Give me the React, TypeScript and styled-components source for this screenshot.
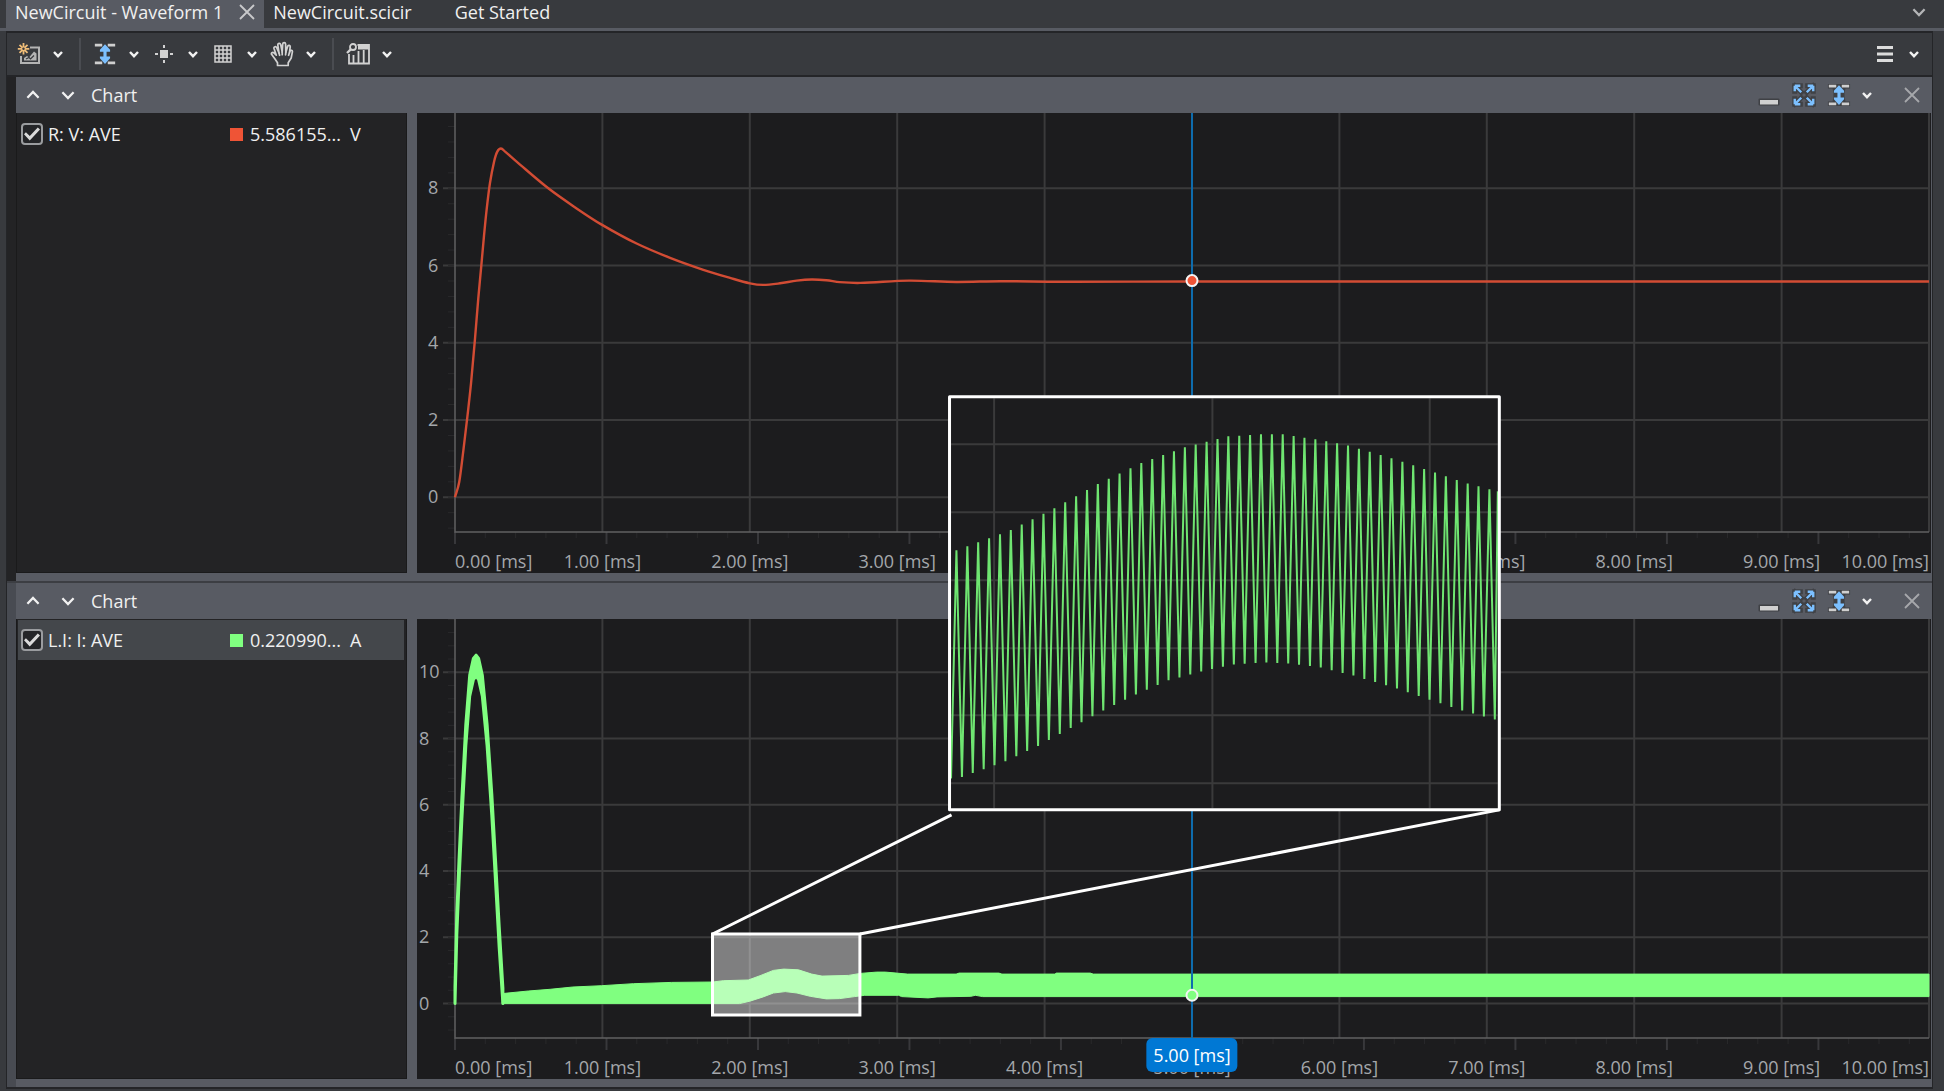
import React, { useLayoutEffect, useRef, useState } from 'react';
import styled, { createGlobalStyle } from 'styled-components';

type Point = [number, number];

const color = {
  bar: '#383a3e',
  panel: '#585b63',
  edge: '#242528',
  list: '#232325',
  plot: '#1c1c1e',
  grid: '#3a3a3b',
  tick: '#38383b',
  minorTick: '#29292b',
  axis: '#606062',
  label: '#a4a7ab',
  text: '#f0f0f0',
  icon: '#d2d2d2',
  blue: '#7cc0ff',
  cursor: '#0e6cad',
  red: '#ef5436',
  green: '#80ff80',
};

const GlobalStyle = createGlobalStyle`
  * { box-sizing: border-box; }
  body {
    margin: 0;
    overflow: hidden;
    background: ${color.bar};
    color: ${color.text};
    font-family: 'Open Sans', 'Noto Sans', sans-serif;
    font-size: 18px;
    line-height: 24px;
  }
`;

const Window = styled.div`
  display: flex;
  flex-direction: column;
  height: 100vh;
`;

const TabBar = styled.nav`
  display: flex;
  align-items: stretch;
  height: 31px;
  padding: 0 18px 0 6px;
  border-bottom: 3px solid ${color.panel};
`;

const Tab = styled.div<{ $active?: boolean }>`
  display: flex;
  align-items: center;
  gap: 15px;
  padding: 0 8px 4px 9px;
  background: ${(p) => (p.$active ? color.panel : 'transparent')};
  & + & { margin-right: 26px; }
`;

const IconButton = styled.button<{ $width?: number }>`
  display: flex;
  flex: none;
  align-items: center;
  justify-content: center;
  width: ${(p) => p.$width ?? 24}px;
  height: 24px;
  padding: 0;
  border: 0;
  background: none;
  color: ${color.icon};
`;

const TabTitle = styled.button`
  padding: 0;
  border: 0;
  background: none;
  color: ${color.text};
  font: inherit;
  white-space: nowrap;
`;

const Spacer = styled.div`
  flex: 1;
`;

const Frame = styled.div`
  display: flex;
  flex: 1;
  flex-direction: column;
  min-height: 0;
  margin: 0 11px 2px 6px;
  border: 2px solid ${color.edge};
  border-width: 2px 1px 2px 1px;
`;

const Toolbar = styled.div`
  display: flex;
  align-items: center;
  height: 44px;
  padding: 0 13px 0 10px;
  border-bottom: 2px solid ${color.edge};
  background: ${color.bar};
`;

const Tool = styled.div<{ $gap?: number }>`
  display: flex;
  align-items: center;
  gap: ${(p) => p.$gap ?? 12}px;
`;

const ToolGroup = styled.div`
  display: flex;
  align-items: center;
  gap: 13px;
`;

const Separator = styled.div`
  width: 2px;
  height: 32px;
  margin: 0 12px 0 16px;
  background: #4a4c51;
`;

const Workspace = styled.div`
  position: relative;
  display: flex;
  flex: 1;
  flex-direction: column;
  gap: 2px;
  min-height: 0;
  background: #3c3e43;
`;

const Section = styled.section<{ $selected?: boolean }>`
  display: flex;
  flex: 1;
  flex-direction: column;
  min-height: 0;
  padding-left: 9px;
  background: ${(p) => (p.$selected ? '#484b52' : color.list)};
`;

const SectionHeader = styled.header`
  display: flex;
  align-items: center;
  height: 36px;
  padding: 0 8px 0 5px;
  background: ${color.panel};
`;

const SectionTitle = styled.h2`
  margin: 0;
  font-size: 18px;
  font-weight: 400;
`;

const HeaderActions = styled.div`
  display: flex;
  align-items: center;
  gap: 11px;
  margin-right: 28px;
`;

const SectionBody = styled.div`
  display: flex;
  flex: 1;
  gap: 10px;
  min-height: 0;
  padding: 0 1px 8px 0;
  background: ${color.panel};
`;

const SignalList = styled.ul`
  flex: none;
  width: 391px;
  margin: 0;
  padding: 1px 2px 0 1px;
  border: 1px solid #1a1a1b;
  border-width: 0 1px 1px 1px;
  background: ${color.list};
  list-style: none;
`;

const Signal = styled.li<{ $selected?: boolean }>`
  display: grid;
  grid-template-columns: 22px 187px 20px 100px 1fr;
  align-items: center;
  height: 40px;
  padding: 0 3px;
  background: ${(p) => (p.$selected ? '#44474b' : 'transparent')};
`;

const Check = styled.input`
  display: grid;
  place-content: center;
  width: 22px;
  height: 22px;
  margin: 0;
  border: 2px solid #9a9c9f;
  border-radius: 4px;
  background: #242528;
  appearance: none;
  &:checked::before {
    content: '';
    width: 16px;
    height: 14px;
    background: #dadada;
    clip-path: polygon(0 52%, 12% 38%, 36% 64%, 86% 4%, 100% 18%, 36% 96%);
  }
`;

const SignalName = styled.label`
  padding-left: 5px;
  white-space: nowrap;
`;

const Swatch = styled.span<{ $color: string }>`
  width: 13px;
  height: 13px;
  background: ${(p) => p.$color};
`;

const PlotArea = styled.div`
  position: relative;
  flex: 1;
  min-width: 0;
  overflow: hidden;
  background: ${color.plot};
`;

const PlotSvg = styled.svg`
  display: block;
  position: absolute;
  inset: 0;
  width: 100%;
  height: 100%;
  text { fill: ${color.label}; }
`;

const CursorBadge = styled.output`
  position: absolute;
  bottom: 7px;
  padding: 5px 7px;
  border-radius: 6px;
  background: #0078d4;
  color: #fff;
  transform: translateX(-50%);
  white-space: nowrap;
`;

const Overlay = styled.svg`
  position: absolute;
  inset: 0;
  width: 100%;
  height: 100%;
  pointer-events: none;
`;

function useSize<T extends Element>() {
  const ref = useRef<T>(null);
  const [size, setSize] = useState({ width: 0, height: 0 });
  useLayoutEffect(() => {
    const node = ref.current;
    if (!node) return;
    const measure = () => {
      const box = node.getBoundingClientRect();
      setSize({ width: box.width, height: box.height });
    };
    measure();
    const observer = new ResizeObserver(measure);
    observer.observe(node);
    return () => observer.disconnect();
  }, []);
  return { ref, ...size };
}

/* ---------- signal data: [time in ms, value] ---------- */

const voltage: Point[] = [
  [0, 0], [0.029, 0.4], [0.057, 1.22], [0.084, 2.09], [0.109, 2.96], [0.136, 4.12],
  [0.158, 5.15], [0.179, 6.02], [0.197, 6.78], [0.215, 7.46], [0.237, 8.13], [0.265, 8.69],
  [0.287, 8.95], [0.312, 9.03], [0.34, 8.95], [0.418, 8.69], [0.633, 8.0], [0.825, 7.48],
  [0.995, 7.06], [1.232, 6.57], [1.459, 6.2], [1.685, 5.89], [1.866, 5.68], [2.001, 5.54],
  [2.09, 5.5], [2.205, 5.54], [2.318, 5.61], [2.42, 5.64], [2.52, 5.62], [2.61, 5.57],
  [2.75, 5.55], [3.08, 5.61], [3.4, 5.575], [3.7, 5.595], [4.1, 5.58], [5, 5.586], [10, 5.586],
];

const inrush: Point[] = [
  [0, 0.2], [0.012, 2.4], [0.027, 4.0], [0.047, 5.9], [0.073, 8.1], [0.1, 9.6],
  [0.125, 10.1], [0.143, 10.2], [0.16, 10.1], [0.185, 9.6], [0.218, 8.1],
  [0.25, 6.0], [0.279, 3.7], [0.3, 2.0], [0.325, 0.15],
];

const currentHigh: Point[] = [
  [0.32, 0.3], [0.497, 0.38], [0.645, 0.43], [0.8, 0.5], [0.995, 0.54], [1.21, 0.6],
  [1.47, 0.64], [1.75, 0.65], [1.82, 0.69], [1.99, 0.71], [2.07, 0.84], [2.16, 1.0],
  [2.23, 1.04], [2.33, 1.02], [2.42, 0.89], [2.49, 0.83], [2.67, 0.85], [2.75, 0.91],
  [2.86, 0.95], [2.92, 0.95], [3.07, 0.89], [3.4, 0.89], [3.42, 0.92], [3.69, 0.92],
  [3.71, 0.89], [4.07, 0.89], [4.08, 0.92], [4.31, 0.92], [4.33, 0.89], [10, 0.89],
];

const currentLow: Point[] = [
  [0.32, 0], [1.93, 0], [2.0, 0.07], [2.09, 0.2], [2.16, 0.32], [2.24, 0.36], [2.32, 0.32],
  [2.41, 0.22], [2.52, 0.14], [2.61, 0.15], [2.71, 0.21], [2.78, 0.25], [3.01, 0.25],
  [3.03, 0.21], [3.21, 0.17], [3.27, 0.2], [3.5, 0.22], [3.53, 0.25], [3.58, 0.21], [10, 0.21],
];

/* Ripple envelopes of the magnified detail, in the detail's own units. */
const detailHigh: Point[] = [
  [0, 153], [5, 152], [59, 132], [103, 110], [146, 86], [189, 65], [233, 49], [277, 38],
  [309, 36], [331, 36], [364, 41], [396, 47], [440, 60], [483, 74], [515, 85], [546, 93],
];
const detailLow: Point[] = [
  [0, 380], [10, 379], [32, 371], [54, 363], [86, 348], [119, 330], [152, 312], [185, 296],
  [217, 282], [250, 273], [282, 266], [315, 264], [336, 265], [369, 269], [401, 277],
  [445, 290], [477, 301], [510, 312], [546, 322],
];

const lerp = (points: Point[], x: number) => {
  const i = Math.max(1, points.findIndex((p) => p[0] >= x));
  const [x0, y0] = points[i - 1];
  const [x1, y1] = points[i];
  return y0 + ((y1 - y0) * (x - x0)) / (x1 - x0);
};

const polyline = (points: Point[]) => points.map(([x, y]) => `${x.toFixed(1)},${y.toFixed(1)}`).join(' ');

const smoothPath = (p: Point[]) =>
  p.slice(1).reduce((d, [x, y], i) => {
    const [ax, ay] = p[Math.max(0, i - 1)];
    const [bx, by] = p[i];
    const [cx, cy] = p[Math.min(p.length - 1, i + 2)];
    const k1 = (x - bx) / 3 / Math.max(0.01, x - ax);
    const k2 = (x - bx) / 3 / Math.max(0.01, cx - bx);
    return (
      d +
      `C${bx + (x - ax) * k1} ${by + (y - ay) * k1} ${x - (cx - bx) * k2} ${y - (cy - by) * k2} ${x} ${y}`
    );
  }, `M${p[0][0]} ${p[0][1]}`);

const RIPPLE = 0.32;
const inrushBand: Point[] = [
  ...inrush.map(([t, v]) => [t, v + RIPPLE] as Point),
  ...inrush.map(([t, v]) => [t, Math.max(0, v - RIPPLE)] as Point).reverse(),
];

const detailRipple: Point[] = Array.from({ length: 102 }, (_, i) => {
  const x = Math.min(546, i * 5.43);
  return [x, lerp(i % 2 ? detailHigh : detailLow, x)];
});

/* ---------- plot ---------- */

const AXIS_LEFT = 38;
const AXIS_BOTTOM = 41;
const SPAN = 10;
const range = (n: number) => Array.from({ length: n }, (_, i) => i);

interface ChartSpec {
  signal: string;
  value: string;
  unit: string;
  tone: string;
  max: number;
  min: number;
  ticks: number[];
  minor: number;
  cursorValue: number;
  selected?: boolean;
}

const charts: ChartSpec[] = [
  { signal: 'R: V: AVE', value: '5.586155...', unit: 'V', tone: color.red, max: 9.95, min: -0.9, ticks: [0, 2, 4, 6, 8], minor: 0.4, cursorValue: 5.61 },
  { signal: 'L.I: I: AVE', value: '0.220990...', unit: 'A', tone: color.green, max: 11.61, min: -1.04, ticks: [0, 2, 4, 6, 8, 10], minor: 0.4, cursorValue: 0.25, selected: true },
];

function Plot({ spec }: { spec: ChartSpec }) {
  const { ref, width, height } = useSize<HTMLDivElement>();
  const right = width - 2;
  const bottom = height - AXIS_BOTTOM;
  const x = (t: number) => AXIS_LEFT + ((right - AXIS_LEFT) * t) / SPAN;
  const y = (v: number) => (bottom * (spec.max - v)) / (spec.max - spec.min);
  const map = (points: Point[]) => points.map(([t, v]) => [x(t), y(v)] as Point);
  const minorCount = Math.floor((spec.max - spec.min) / spec.minor);
  const firstMinor = Math.ceil(spec.min / spec.minor);
  const tickStep = (right - AXIS_LEFT) / 9.73 / 5;
  const labelX = spec.ticks.includes(10) ? 2 : 11;

  return (
    <PlotArea ref={ref}>
      {width > 0 && (
        <PlotSvg>
          {spec.ticks.map((v) => (
            <line key={v} x1={AXIS_LEFT - 12} x2={right} y1={y(v)} y2={y(v)} stroke={color.grid} strokeWidth={2} />
          ))}
          {range(10).map((i) => (
            <line key={i} x1={x(i + 1)} x2={x(i + 1)} y1={0} y2={bottom} stroke={color.grid} strokeWidth={2} />
          ))}
          {range(minorCount + 1).map((i) => (
            <line key={i} x1={AXIS_LEFT - 7} x2={AXIS_LEFT} y1={y((firstMinor + i) * spec.minor)} y2={y((firstMinor + i) * spec.minor)} stroke={color.minorTick} />
          ))}
          {range(49).map((i) => (
            <line
              key={i}
              x1={AXIS_LEFT + i * tickStep}
              x2={AXIS_LEFT + i * tickStep}
              y1={bottom}
              y2={bottom + (i % 5 ? 6 : 12)}
              stroke={i % 5 ? color.minorTick : color.tick}
              strokeWidth={i % 5 ? 1 : 2}
            />
          ))}
          <polyline points={`${AXIS_LEFT},0 ${AXIS_LEFT},${bottom} ${right},${bottom}`} fill="none" stroke={color.axis} strokeWidth={1.5} />
          {spec.ticks.map((v) => (
            <text key={v} x={labelX} y={y(v) + 6}>{v}</text>
          ))}
          {range(11).map((i) => (
            <text key={i} x={x(i)} y={bottom + 36} textAnchor={i === 0 ? 'start' : i === 10 ? 'end' : 'middle'}>
              {`${i}.00 [ms]`}
            </text>
          ))}
          {spec.unit === 'V' ? (
            <path d={smoothPath(map(voltage))} fill="none" stroke="#d24c34" strokeWidth={2.4} />
          ) : (
            <>
              <polygon points={polyline(map(inrushBand))} fill={color.green} stroke={color.green} strokeWidth={3} strokeLinejoin="round" />
              <polygon points={polyline([...map(currentHigh), ...map(currentLow).reverse()])} fill={color.green} stroke={color.green} />
            </>
          )}
          <line x1={x(5)} x2={x(5)} y1={0} y2={bottom} stroke={color.cursor} strokeWidth={2} />
          <circle cx={x(5)} cy={y(spec.cursorValue)} r={5.5} fill={spec.tone} stroke="#f4f4f4" strokeWidth={2} />
        </PlotSvg>
      )}
      {spec.selected && width > 0 && <CursorBadge style={{ left: x(5) }}>5.00 [ms]</CursorBadge>}
    </PlotArea>
  );
}

/* ---------- magnified detail, drawn across both charts ---------- */

function Magnifier() {
  const { ref, width, height } = useSize<SVGSVGElement>();
  const plotLeft = 448;
  const ms = (width - plotLeft - 3) / SPAN;
  const at = (t: number) => plotLeft + t * ms;
  const boxX = at(1.747);
  const boxW = ms;
  const boxY = height - 153;
  const insetX = at(3.355);
  const insetW = ms * 3.73;
  const insetY = height * 0.3167;
  const insetH = height * 0.4089;
  const insetBottom = insetY + insetH;

  return (
    <Overlay ref={ref} aria-hidden="true">
      {width > 0 && (
        <>
          <rect x={boxX} y={boxY} width={boxW} height={81} fill="rgba(255,255,255,0.44)" stroke="#fff" strokeWidth={3} />
          <path
            d={`M${boxX} ${boxY}L${insetX + 2} ${insetBottom + 5}M${boxX + boxW} ${boxY}L${insetX + insetW} ${insetBottom}`}
            stroke="#fff"
            strokeWidth={3}
          />
          <svg x={insetX} y={insetY} width={insetW} height={insetH} viewBox="-1.5 -1.5 549 413" preserveAspectRatio="none">
            <rect x={-2} y={-2} width={550} height={414} fill={color.plot} />
            {[43, 261, 478].map((v) => (
              <line key={v} x1={v} x2={v} y1={0} y2={410} stroke={color.grid} strokeWidth={2} />
            ))}
            {[46, 114, 182, 250, 317, 385].map((v) => (
              <line key={v} x1={0} x2={546} y1={v} y2={v} stroke={color.grid} strokeWidth={2} />
            ))}
            <polyline points={polyline(detailRipple)} fill="none" stroke="#6fe571" strokeWidth={2} strokeLinejoin="bevel" />
          </svg>
          <rect x={insetX} y={insetY} width={insetW} height={insetH} fill="none" stroke="#fff" strokeWidth={3} strokeLinejoin="round" />
        </>
      )}
    </Overlay>
  );
}

/* ---------- icons ---------- */

const Chevron = ({ up, large, tone = '#f2f2f2' }: { up?: boolean; large?: boolean; tone?: string }) => (
  <svg width={large ? 14 : 10} height={large ? 14 : 10} viewBox="0 0 10 10" fill="none" stroke={tone} strokeWidth={large ? 1.6 : 2.4}>
    <path d={up ? 'M1 7l4-4.200 4 4.200' : 'M1 3l4 4.200L9 3'} />
  </svg>
);

const Cross = ({ size = 16, tone = '#c8c9cb' }: { size?: number; tone?: string }) => (
  <svg width={size} height={size} viewBox="0 0 16 16" stroke={tone} strokeWidth={1.8}>
    <path d="M1 1l14 14M15 1L1 15" />
  </svg>
);

const FitVertical = ({ outlined }: { outlined?: boolean }) => (
  <svg width="26" height="26" viewBox="-1 -1 26 26">
    {outlined && (
      <path d="M0 0h24v5h-5l-1 5v4l1 5h5v5H0v-5h5l1-5v-4L5 5H0z" fill="#3f4145" />
    )}
    <path d="M1 2.500h8M15 2.500h8M1 21.500h8M15 21.500h8" stroke="#cfcfcf" strokeWidth="3" />
    <path d="M12 1.500l5.500 6v2h-3.800v5.200h3.800v2l-5.500 6-5.500-6v-2h3.800V9.500H6.500v-2z" fill={color.blue} />
  </svg>
);

const NewImage = () => (
  <svg width="24" height="24" viewBox="0 0 24 24" fill="none" stroke={color.icon}>
    <path d="M13 5.500h9v15.500H4V14" stroke="#b4b4b4" strokeWidth="2" />
    <path d="M7 18.500v-2.500l3-2 2 1.500 5-6 2.500 2v7z" fill="#b4b4b4" stroke="none" />
    <path d="M9 17l3-1.500 1.500 1.500 3.500-3.500" stroke="#383a3e" strokeWidth="1.200" />
    <path d="M6.500 1v11.500M.8 6.800h11.500M2.500 2.800l8 8M10.500 2.800l-8 8" stroke="#f0bd78" strokeWidth="1.800" />
    <circle cx="6.500" cy="6.800" r="1.200" fill="#383a3e" stroke="none" />
  </svg>
);

const Crosshair = () => (
  <svg width="20" height="20" viewBox="0 0 20 20" fill={color.icon}>
    <rect x="6" y="6" width="8" height="8" />
    <path d="M9 1h2v3H9zM9 16h2v3H9zM1 9h3v2H1zM16 9h3v2h-3z" />
  </svg>
);

const GridIcon = () => (
  <svg width="18" height="18" viewBox="0 0 18 18" fill="none" stroke={color.icon} strokeWidth="1.500">
    <path d="M1 1h16v16H1zM5 1v16M9 1v16M13 1v16M1 5h16M1 9h16M1 13h16" />
  </svg>
);

const Hand = () => (
  <svg width="24" height="26" viewBox="0 0 24 26" fill="none" stroke={color.icon} strokeWidth="1.700" strokeLinejoin="round" strokeLinecap="round">
    <path d="M7.500 24.500v-2.700L5 18 1.700 13.600c-1-1.500.9-2.900 2.200-1.700l2.400 2.300L4 7.500C3.500 5.600 6 4.900 6.700 6.700L9 12 7.800 4c-.2-2 2.400-2.400 2.900-.4L12.200 11l.5-8c.2-1.900 2.800-1.800 2.900.1L15.800 11.400l1.800-6c.6-1.700 2.900-1.100 2.600.7L19.400 12l.7-1.900c.8-1.500 2.600-.8 2.300.8L21.200 17l-3 4.800v2.700z" />
    <path d="M9 12l.6 2.300M12.200 11v2.700M15.800 11.400l-.2 2.400M19.400 12l-.8 2.300" />
  </svg>
);

const Histogram = () => (
  <svg width="24" height="22" viewBox="0 0 24 22" fill="none" stroke={color.icon} strokeWidth="1.800">
    <path d="M11.500 2H23v18.500H3V11" />
    <path d="M12 2h11v4.500H12z" fill={color.icon} stroke="none" />
    <path d="M7.500 12v8M12.500 8v12M17.700 7v13" />
    <circle cx="7" cy="4" r="3" />
    <path d="M5 6.200L1 10" strokeWidth="2.400" />
  </svg>
);

const MenuIcon = () => (
  <svg width="18" height="18" viewBox="0 0 18 18" stroke="#dcdcdc" strokeWidth="3">
    <path d="M1 2.500h16M1 9h16M1 15.500h16" />
  </svg>
);

const Minimize = () => (
  <svg width="22" height="24" viewBox="0 0 22 24">
    <rect x=".5" y="15.500" width="21" height="7" rx="1" fill="#3f4145" />
    <rect x="2" y="17" width="18" height="4.500" fill="#d0d0d0" />
  </svg>
);

const arrows = 'M2 2h6M2 2v6M2 2l7 7M22 2h-6M22 2v6M22 2l-7 7M2 22h6M2 22v-6M2 22l7-7M22 22h-6M22 22v-6M22 22l-7-7';

const Expand = () => (
  <svg width="26" height="26" viewBox="-1 -1 26 26">
    <path d={arrows} stroke="#3f4145" strokeWidth="5.500" strokeLinecap="square" />
    <path d={arrows} stroke={color.blue} strokeWidth="2.600" />
  </svg>
);

function ToolButton({ label, icon }: { label: string; icon: React.ReactNode }) {
  return (
    <Tool>
      <IconButton aria-label={label}>{icon}</IconButton>
      <IconButton $width={10} aria-label={`${label} options`}><Chevron /></IconButton>
    </Tool>
  );
}

function ChartSection({ spec }: { spec: ChartSpec }) {
  const id = `signal-${spec.unit}`;
  return (
    <Section $selected={spec.selected}>
      <SectionHeader>
        <IconButton aria-label="Move up"><Chevron up large /></IconButton>
        <IconButton $width={46} aria-label="Move down"><Chevron large /></IconButton>
        <SectionTitle>Chart</SectionTitle>
        <Spacer />
        <HeaderActions>
          <IconButton aria-label="Minimize"><Minimize /></IconButton>
          <IconButton aria-label="Maximize"><Expand /></IconButton>
          <IconButton aria-label="Fit vertically"><FitVertical outlined /></IconButton>
          <IconButton $width={10} aria-label="Fit options"><Chevron /></IconButton>
        </HeaderActions>
        <IconButton aria-label="Close chart"><Cross tone="#a6a8ab" /></IconButton>
      </SectionHeader>
      <SectionBody>
        <SignalList>
          <Signal $selected={spec.selected}>
            <Check id={id} type="checkbox" defaultChecked />
            <SignalName htmlFor={id}>{spec.signal}</SignalName>
            <Swatch $color={spec.tone} />
            <span>{spec.value}</span>
            <span>{spec.unit}</span>
          </Signal>
        </SignalList>
        <Plot spec={spec} />
      </SectionBody>
    </Section>
  );
}

export default function App() {
  return (
    <Window>
      <GlobalStyle />
      <TabBar>
        <Tab $active>
          <TabTitle>NewCircuit - Waveform 1</TabTitle>
          <IconButton $width={18} aria-label="Close tab"><Cross /></IconButton>
        </Tab>
        <Tab><TabTitle>NewCircuit.scicir</TabTitle></Tab>
        <Tab><TabTitle>Get Started</TabTitle></Tab>
        <Spacer />
        <IconButton $width={14} aria-label="All tabs"><Chevron large tone="#b4b5b7" /></IconButton>
      </TabBar>
      <Frame>
        <Toolbar>
          <ToolGroup>
            <ToolButton label="New image" icon={<NewImage />} />
          </ToolGroup>
          <Separator />
          <ToolGroup>
            <ToolButton label="Fit vertically" icon={<FitVertical />} />
            <ToolButton label="Cursor" icon={<Crosshair />} />
            <ToolButton label="Grid" icon={<GridIcon />} />
            <ToolButton label="Pan" icon={<Hand />} />
          </ToolGroup>
          <Separator />
          <ToolButton label="Statistics" icon={<Histogram />} />
          <Spacer />
          <ToolButton label="Menu" icon={<MenuIcon />} />
        </Toolbar>
        <Workspace>
          {charts.map((spec) => (
            <ChartSection key={spec.unit} spec={spec} />
          ))}
          <Magnifier />
        </Workspace>
      </Frame>
    </Window>
  );
}
